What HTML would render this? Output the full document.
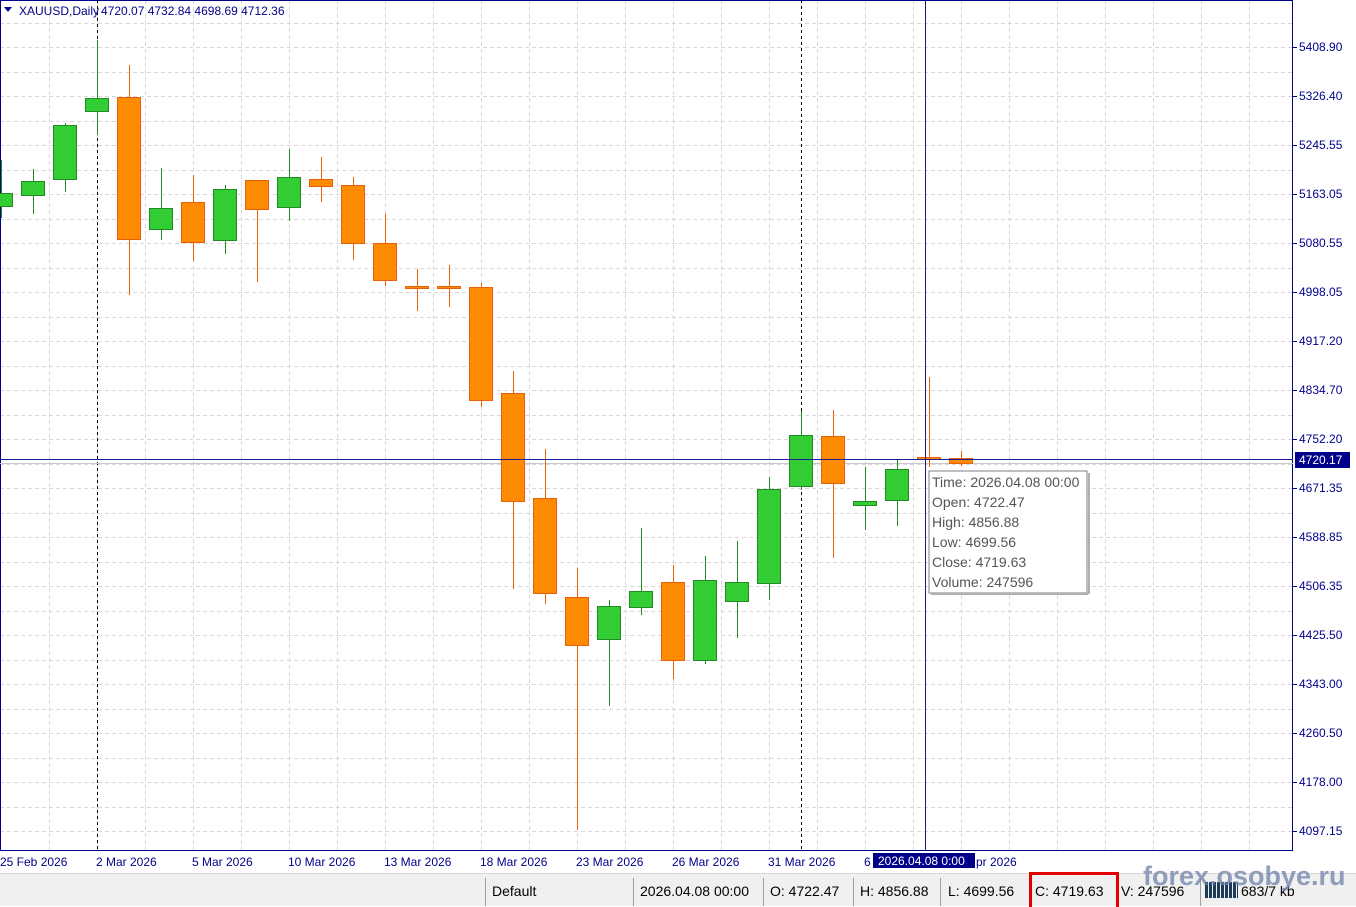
<!DOCTYPE html>
<html><head><meta charset="utf-8"><style>
body{margin:0;width:1356px;height:905px;overflow:hidden;background:#fff;font-family:"Liberation Sans",sans-serif;position:relative}
.st{position:absolute;left:0;top:873px;width:1356px;height:32px;background:#f0f0f0;border-top:1px solid #d8d8d8}
.st span{position:absolute;top:9px;font-size:14px;color:#000}
.sep{position:absolute;top:4px;width:1px;height:28px;background:#a0a0a0}
</style></head><body>
<svg width="1356" height="873" style="position:absolute;left:0;top:0" font-family="Liberation Sans, sans-serif">
<g id="grid" stroke="#d8d8d8" stroke-dasharray="4,3" stroke-width="1"></g>
<rect x="0.5" y="0.5" width="1292" height="850" fill="none" stroke="#00008b"/>
<line x1="97.5" y1="0" x2="97.5" y2="850" stroke="#000" stroke-dasharray="3,3"/>
<line x1="801.5" y1="0" x2="801.5" y2="850" stroke="#000" stroke-dasharray="3,3"/>
<line x1="0" y1="463.5" x2="1293" y2="463.5" stroke="#c8c8c8"/>
<g id="c"></g>
<line x1="925.5" y1="0" x2="925.5" y2="850" stroke="#1a1a7a"/>
<line x1="0" y1="459.5" x2="1293" y2="459.5" stroke="#1a1a9a"/>
<g id="ax" font-size="12" fill="#00008b"></g>
<path d="M4 7h8l-4 5z" fill="#00008b"/>
<text x="19" y="15" font-size="12" fill="#00008b">XAUUSD,Daily</text>
<text x="101" y="15" font-size="12" fill="#00008b">4720.07 4732.84 4698.69 4712.36</text>
<rect x="1295" y="452" width="55" height="16" fill="#00008b"/>
<text x="1299" y="464" font-size="12" fill="#fff">4720.17</text>
<rect x="873" y="853" width="102" height="15" fill="#00008b"/>
<text x="878" y="865" font-size="12" fill="#fff">2026.04.08 0:00</text>
<rect x="929" y="471" width="158" height="122" fill="#fff" stroke="#808080"/>
<line x1="931" y1="594" x2="1088" y2="594" stroke="#b0b0b0" stroke-width="2"/>
<line x1="1089" y1="473" x2="1089" y2="594" stroke="#b0b0b0" stroke-width="2"/>
<g font-size="14" fill="#555">
<text x="932" y="487">Time: 2026.04.08 00:00</text>
<text x="932" y="507">Open: 4722.47</text>
<text x="932" y="527">High: 4856.88</text>
<text x="932" y="547">Low:  4699.56</text>
<text x="932" y="567">Close: 4719.63</text>
<text x="932" y="587">Volume: 247596</text>
</g>
<g font-size="12" fill="#00008b">
<text x="0" y="866">25 Feb 2026</text><text x="96" y="866">2 Mar 2026</text><text x="192" y="866">5 Mar 2026</text>
<text x="288" y="866">10 Mar 2026</text><text x="384" y="866">13 Mar 2026</text><text x="480" y="866">18 Mar 2026</text>
<text x="576" y="866">23 Mar 2026</text><text x="672" y="866">26 Mar 2026</text><text x="768" y="866">31 Mar 2026</text>
<text x="864" y="866">6</text><text x="976" y="866">pr 2026</text>
<text x="1299" y="51">5408.90</text><text x="1299" y="100">5326.40</text><text x="1299" y="149">5245.55</text>
<text x="1299" y="198">5163.05</text><text x="1299" y="247">5080.55</text><text x="1299" y="296">4998.05</text>
<text x="1299" y="345">4917.20</text><text x="1299" y="394">4834.70</text><text x="1299" y="443">4752.20</text>
<text x="1299" y="492">4671.35</text><text x="1299" y="541">4588.85</text><text x="1299" y="590">4506.35</text>
<text x="1299" y="639">4425.50</text><text x="1299" y="688">4343.00</text><text x="1299" y="737">4260.50</text>
<text x="1299" y="786">4178.00</text><text x="1299" y="835">4097.15</text>
</g>
</svg>
<div class="st">
<div class="sep" style="left:485px"></div><div class="sep" style="left:633px"></div><div class="sep" style="left:763px"></div><div class="sep" style="left:853px"></div><div class="sep" style="left:940px"></div><div class="sep" style="left:1117px"></div><div class="sep" style="left:1200px"></div>
<span style="left:492px">Default</span><span style="left:640px">2026.04.08 00:00</span><span style="left:770px">O: 4722.47</span><span style="left:860px">H: 4856.88</span><span style="left:948px">L: 4699.56</span><span style="left:1035px">C: 4719.63</span><span style="left:1121px">V: 247596</span><span style="left:1241px">683/7 kb</span>
<div style="position:absolute;left:1029px;top:-2px;width:84px;height:32px;border:3px solid #e00000;border-bottom:none"></div>
<div style="position:absolute;left:1205px;top:8px;width:33px;height:16px;background:repeating-linear-gradient(90deg,#1e3c5a 0 3px,#f0f0f0 3px 4px)"></div>
<div style="position:absolute;left:1143px;top:-13px;font-size:27px;font-weight:bold;color:rgba(110,130,170,0.75)">forex.osobye.ru</div>
</div>
<script>
var g=document.getElementById('grid'),s='';
for(var x=48;x<1293;x+=48)s+='<line x1="'+(x+1.5)+'" y1="0" x2="'+(x+1.5)+'" y2="850"/>';
for(var y=22.5;y<850;y+=24.5)s+='<line x1="0" y1="'+Math.round(y)+'.5" x2="1293" y2="'+Math.round(y)+'.5"/>';
g.innerHTML=s;
var a='';for(var y=47;y<=831;y+=49)a+='<line x1="1293" y1="'+(y+.5)+'" x2="1297" y2="'+(y+.5)+'" stroke="#00008b"/>';
document.getElementById('ax').innerHTML=a;
var d=[[1,'g',193,206,160,218],[33,'g',181,195,169,214],[65,'g',125,179,123,192],[97,'g',98,111,40,135],[129,'o',97,239,65,295],[161,'g',208,229,168,240],[193,'o',202,242,175,261],[225,'g',189,240,185,254],[257,'o',180,209,181,282],[289,'g',177,207,149,221],[321,'o',179,186,157,202],[353,'o',185,243,177,260],[385,'o',243,280,214,286],[417,'o',286,288,269,311],[449,'o',286,288,265,307],[481,'o',287,400,283,407],[513,'o',393,501,371,589],[545,'o',498,593,449,604],[577,'o',597,645,568,830],[609,'g',606,639,600,706],[641,'g',591,607,528,615],[673,'o',582,660,565,679],[705,'g',580,660,556,664],[737,'g',582,601,541,638],[769,'g',489,583,477,600],[801,'g',435,486,411,490],[833,'o',436,483,410,558],[865,'g',501,505,467,530],[897,'g',469,500,460,526],[929,'o',457,459,377,467],[961,'o',458,463,451,466]];
var c='';d.forEach(function(k){var cx=k[0]+0.5,f=k[1]=='g'?'#32cd32':'#ff8c00',st=k[1]=='g'?'#228b22':'#e8600a';
c+='<line x1="'+cx+'" y1="'+k[4]+'" x2="'+cx+'" y2="'+k[5]+'" stroke="'+st+'"/>';
c+='<rect x="'+(k[0]-11.5)+'" y="'+(k[2]+.5)+'" width="23" height="'+Math.max(1,k[3]-k[2])+'" fill="'+f+'" stroke="'+st+'"/>';});
document.getElementById('c').innerHTML=c;
</script>
</body></html>
